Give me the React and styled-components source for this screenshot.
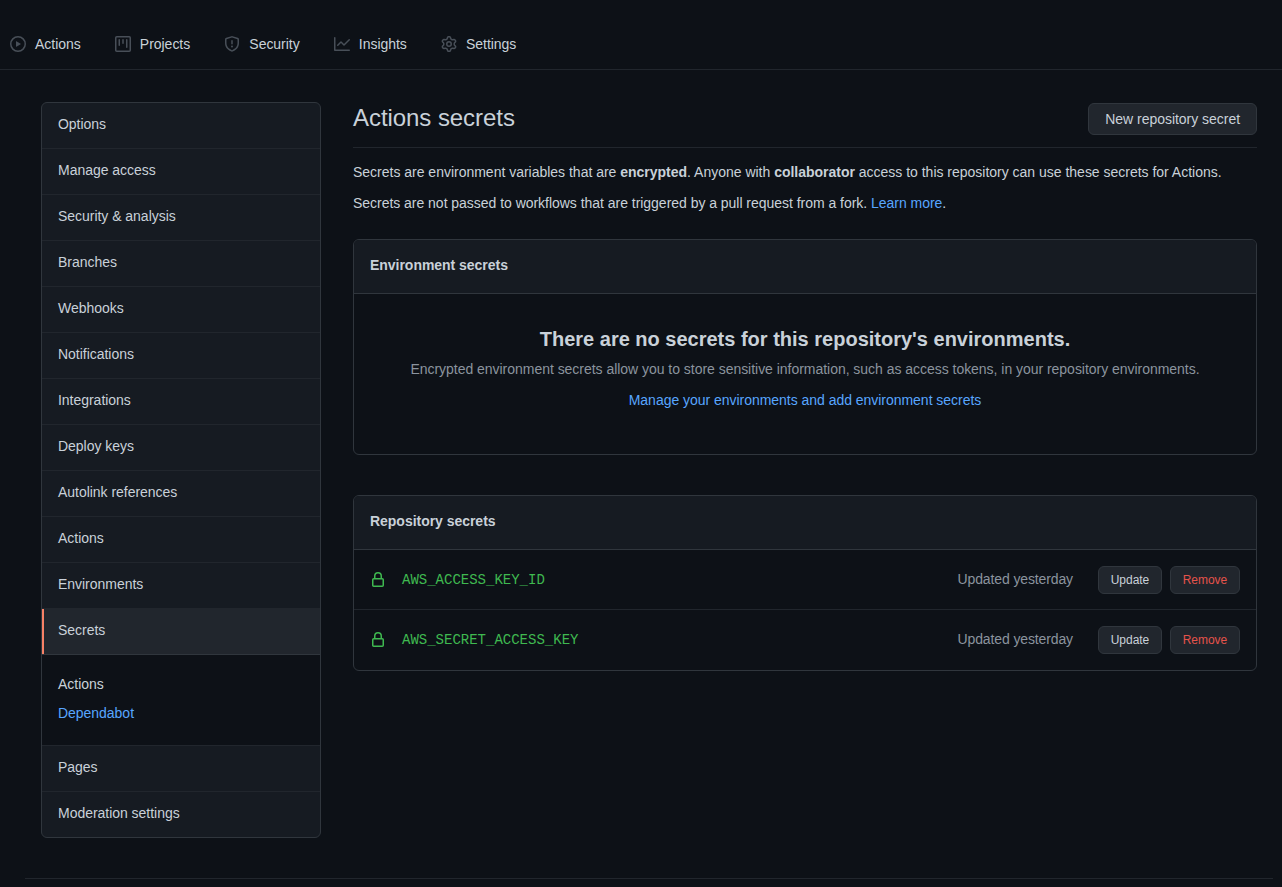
import React from "react"
import styled, { createGlobalStyle } from "styled-components"

const GlobalStyle = createGlobalStyle`
  html, body {
    margin: 0;
    padding: 0;
    background: #0d1117;
    overflow: hidden;
  }
  body {
    font-family: "Liberation Sans", Arial, sans-serif;
    font-size: 14px;
    line-height: 1.5;
    letter-spacing: -0.03px;
    color: #c9d1d9;
  }
  * { box-sizing: border-box; }
`

const Page = styled.div`
  height: 887px;
  overflow: hidden;
`

const TopNav = styled.nav`
  display: flex;
  align-items: center;
  gap: 34.15px;
  height: 70px;
  padding: 18px 0 0 10px;
  border-bottom: 1px solid #21262d;
`

const Tab = styled.a`
  display: flex;
  align-items: center;
  gap: 9px;
  color: #c9d1d9;
  line-height: 16px;
`

const TabIcon = styled.svg`
  width: 16px;
  height: 16px;
  fill: #484f58;
  flex: none;
`

const Layout = styled.div`
  display: flex;
  gap: 32px;
  padding: 32px 25px 0 41px;
`

const Sidebar = styled.aside`
  width: 280px;
  flex: none;
  border: 1px solid #30363d;
  border-radius: 6px;
  background: #161b22;
  overflow: hidden;
`

const MenuItem = styled.a`
  display: block;
  height: 46px;
  padding: 11px 16px 0;
  line-height: 21px;
  border-bottom: 1px solid #21262d;
  color: #c9d1d9;
  &:last-child { border-bottom: none; height: 45px; }
`

const ActiveItem = styled(MenuItem)`
  background: #21262d;
  border-bottom-color: #30363d;
  box-shadow: inset 2px 0 0 #f78166;
`

const SubMenu = styled.div`
  display: flex;
  flex-direction: column;
  gap: 8px;
  height: 91px;
  padding: 19px 16px 0;
  background: #0d1117;
  border-bottom: 1px solid #21262d;
`

const SubLink = styled.a`
  line-height: 21px;
  color: ${(p) => (p.$active ? "#58a6ff" : "#c9d1d9")};
`

const Main = styled.main`
  flex: 1;
  min-width: 0;
`

const Header = styled.div`
  display: flex;
  justify-content: space-between;
  align-items: center;
  height: 46px;
  border-bottom: 1px solid #21262d;
  padding-bottom: 12px;
  margin-bottom: 14px;
`

const Title = styled.h2`
  margin: 0 0 2px;
  font-size: 24px;
  font-weight: 400;
  line-height: 30px;
  letter-spacing: -0.06px;
`

const Button = styled.button`
  font-family: inherit;
  font-size: 14px;
  letter-spacing: inherit;
  line-height: 20px;
  padding: 5px 16px;
  color: #c9d1d9;
  background: #21262d;
  border: 1px solid #30363d;
  border-radius: 6px;
`

const Paragraph = styled.p`
  margin: 0 0 10px;
  line-height: 21px;
  letter-spacing: ${(p) => (p.$loose ? "-0.01px" : "inherit")};
`

const Link = styled.a`
  color: #58a6ff;
`

const Box = styled.section`
  border: 1px solid #30363d;
  border-radius: 6px;
  margin-top: ${(p) => p.$top}px;
  overflow: hidden;
`

const BoxHeader = styled.div`
  height: 54px;
  padding: 15px 16px 0;
  line-height: 21px;
  font-weight: 600;
  background: #161b22;
  border-bottom: 1px solid #30363d;
`

const Blank = styled.div`
  height: 160px;
  padding-top: 30px;
  text-align: center;
`

const BlankTitle = styled.h3`
  margin: 0 0 5px;
  font-size: 20px;
  font-weight: 700;
  line-height: 30px;
  letter-spacing: 0;
`

const BlankText = styled.p`
  margin: 0 0 10px;
  line-height: 21px;
  color: #8b949e;
`

const SecretRow = styled.div`
  display: flex;
  align-items: center;
  height: 60px;
  padding: 0 16px;
  border-bottom: 1px solid #21262d;
  &:last-child { border-bottom: none; padding-bottom: 1px; }
`

const LockIcon = styled.svg`
  width: 16px;
  height: 16px;
  fill: #3fb950;
  flex: none;
`

const SecretName = styled.code`
  flex: 1;
  margin-left: 16px;
  padding-top: 1px;
  font-family: "Liberation Mono", "Courier New", monospace;
  font-size: 14px;
  letter-spacing: 0;
  color: #3fb950;
`

const Updated = styled.span`
  color: #8b949e;
  letter-spacing: -0.12px;
  margin-right: 25px;
`

const SmallButton = styled.button`
  font-family: inherit;
  font-size: 12px;
  letter-spacing: inherit;
  line-height: 20px;
  width: ${(p) => (p.$danger ? 70 : 64)}px;
  height: 28px;
  padding: 3px 0;
  margin-left: ${(p) => (p.$danger ? 8 : 0)}px;
  color: ${(p) => (p.$danger ? "#e5534b" : "#c9d1d9")};
  background: #21262d;
  border: 1px solid #30363d;
  border-radius: 6px;
`

const Footer = styled.div`
  margin: 40px 9px 0 25px;
  border-top: 1px solid #21262d;
`

const icons = {
  play: "M1.5 8a6.5 6.5 0 1113 0 6.5 6.5 0 01-13 0zM8 0a8 8 0 100 16A8 8 0 008 0zM6.379 5.227A.25.25 0 006 5.442v5.117a.25.25 0 00.379.214l4.264-2.559a.25.25 0 000-.428L6.379 5.227z",
  project: "M1.75 0A1.75 1.75 0 000 1.75v12.5C0 15.216.784 16 1.75 16h12.5A1.75 1.75 0 0016 14.25V1.75A1.75 1.75 0 0014.25 0H1.75zM1.5 1.75a.25.25 0 01.25-.25h12.5a.25.25 0 01.25.25v12.5a.25.25 0 01-.25.25H1.75a.25.25 0 01-.25-.25V1.75zM11.75 3a.75.75 0 00-.75.75v7.5a.75.75 0 001.5 0v-7.5a.75.75 0 00-.75-.75zm-8.25.75a.75.75 0 011.5 0v5.5a.75.75 0 01-1.5 0v-5.5zM8 3a.75.75 0 00-.75.75v3.5a.75.75 0 001.5 0v-3.5A.75.75 0 008 3z",
  shield: "M7.467.133a1.75 1.75 0 011.066 0l5.25 1.68A1.75 1.75 0 0115 3.48V7c0 1.566-.32 3.182-1.303 4.682-.983 1.498-2.585 2.813-5.032 3.855a1.7 1.7 0 01-1.33 0c-2.447-1.042-4.049-2.357-5.032-3.855C1.32 10.182 1 8.566 1 7V3.48a1.75 1.75 0 011.217-1.667l5.25-1.68zm.61 1.429a.25.25 0 00-.153 0l-5.25 1.68a.25.25 0 00-.174.238V7c0 1.358.275 2.666 1.057 3.86.784 1.194 2.121 2.34 4.366 3.297a.2.2 0 00.154 0c2.245-.956 3.582-2.104 4.366-3.298C13.225 9.666 13.5 8.36 13.5 7V3.48a.25.25 0 00-.174-.237l-5.25-1.68zM9 10.5a1 1 0 11-2 0 1 1 0 012 0zm-.25-5.75a.75.75 0 10-1.5 0v3a.75.75 0 001.5 0v-3z",
  graph: "M1.5 1.75a.75.75 0 00-1.5 0v12.5c0 .414.336.75.75.75h14.5a.75.75 0 000-1.5H1.5V1.75zm14.28 2.53a.75.75 0 00-1.06-1.06L10 7.94 7.53 5.47a.75.75 0 00-1.06 0L3.22 8.72a.75.75 0 001.06 1.06L7 7.06l2.47 2.47a.75.75 0 001.06 0l5.25-5.25z",
  gear: "M7.429 1.525a6.593 6.593 0 011.142 0c.036.003.108.036.137.146l.289 1.105c.147.56.55.967.997 1.189.174.086.341.183.501.29.417.278.97.423 1.53.27l1.102-.303c.11-.03.175.016.195.046.219.31.41.641.573.989.014.031.022.11-.059.19l-.815.806c-.411.406-.562.957-.53 1.456a4.588 4.588 0 010 .582c-.032.499.119 1.05.53 1.456l.815.806c.08.08.073.159.059.19a6.494 6.494 0 01-.573.99c-.02.029-.086.074-.195.045l-1.103-.303c-.559-.153-1.112-.008-1.529.27-.16.107-.327.204-.5.29-.449.222-.851.628-.998 1.189l-.289 1.105c-.029.11-.101.143-.137.146a6.613 6.613 0 01-1.142 0c-.036-.003-.108-.037-.137-.146l-.289-1.105c-.147-.56-.55-.967-.997-1.189a4.502 4.502 0 01-.501-.29c-.417-.278-.97-.423-1.53-.27l-1.102.303c-.11.03-.175-.016-.195-.046a6.492 6.492 0 01-.573-.989c-.014-.031-.022-.11.059-.19l.815-.806c.411-.406.562-.957.53-1.456a4.587 4.587 0 010-.582c.032-.499-.119-1.05-.53-1.456l-.815-.806c-.08-.08-.073-.159-.059-.19a6.44 6.44 0 01.573-.99c.02-.029.086-.075.195-.045l1.103.303c.559.153 1.112.008 1.529-.27.16-.107.327-.204.5-.29.449-.222.851-.628.998-1.189l.289-1.105c.029-.11.101-.143.137-.146zM8 0c-.236 0-.47.01-.701.03-.743.065-1.29.615-1.458 1.261l-.29 1.106c-.017.066-.078.158-.211.224a5.994 5.994 0 00-.668.386c-.123.082-.233.09-.3.071L3.27 2.776c-.644-.177-1.392.02-1.82.63a7.977 7.977 0 00-.704 1.217c-.315.675-.111 1.422.363 1.891l.815.806c.05.048.098.147.088.294a6.084 6.084 0 000 .772c.01.147-.038.246-.088.294l-.815.806c-.474.469-.678 1.216-.363 1.891.2.428.436.835.704 1.218.428.609 1.176.806 1.82.63l1.103-.303c.066-.019.176-.011.299.071.213.143.436.272.668.386.133.066.194.158.212.224l.289 1.106c.169.646.715 1.196 1.458 1.26a8.094 8.094 0 001.402 0c.743-.064 1.29-.614 1.458-1.26l.29-1.106c.017-.066.078-.158.211-.224a5.98 5.98 0 00.668-.386c.123-.082.233-.09.3-.071l1.102.302c.644.177 1.392-.02 1.82-.63.268-.382.505-.789.704-1.217.315-.675.111-1.422-.364-1.891l-.814-.806c-.05-.048-.098-.147-.088-.294a6.1 6.1 0 000-.772c-.01-.147.039-.246.088-.294l.814-.806c.475-.469.679-1.216.364-1.891a7.992 7.992 0 00-.704-1.218c-.428-.609-1.176-.806-1.82-.63l-1.103.303c-.066.019-.176.011-.299-.071a5.991 5.991 0 00-.668-.386c-.133-.066-.194-.158-.212-.224L10.16 1.29C9.99.645 9.444.095 8.701.031A8.094 8.094 0 008 0zm1.5 8a1.5 1.5 0 11-3 0 1.5 1.5 0 013 0zM11 8a3 3 0 11-6 0 3 3 0 016 0z",
}

const lockPath = "M4 4v2h-.25A1.75 1.75 0 002 7.75v5.5c0 .966.784 1.75 1.75 1.75h8.5A1.75 1.75 0 0014 13.25v-5.5A1.75 1.75 0 0012.25 6H12V4a4 4 0 10-8 0zm6.5 2V4a2.5 2.5 0 00-5 0v2h5zM12 7.5h.25a.25.25 0 01.25.25v5.5a.25.25 0 01-.25.25h-8.5a.25.25 0 01-.25-.25v-5.5a.25.25 0 01.25-.25H12z"

const tabs = [
  { label: "Actions", icon: "play" },
  { label: "Projects", icon: "project" },
  { label: "Security", icon: "shield" },
  { label: "Insights", icon: "graph" },
  { label: "Settings", icon: "gear" },
]

const menuTop = ["Options", "Manage access", "Security & analysis", "Branches", "Webhooks", "Notifications", "Integrations", "Deploy keys", "Autolink references", "Actions", "Environments"]
const secrets = ["AWS_ACCESS_KEY_ID", "AWS_SECRET_ACCESS_KEY"]

export default function App() {
  return (
    <Page>
      <GlobalStyle />
      <TopNav>
        {tabs.map((t) => (
          <Tab key={t.label}>
            <TabIcon viewBox="0 0 16 16"><path fillRule="evenodd" d={icons[t.icon]} /></TabIcon>
            {t.label}
          </Tab>
        ))}
      </TopNav>
      <Layout>
        <Sidebar>
          {menuTop.map((m) => <MenuItem key={m}>{m}</MenuItem>)}
          <ActiveItem>Secrets</ActiveItem>
          <SubMenu>
            <SubLink>Actions</SubLink>
            <SubLink $active>Dependabot</SubLink>
          </SubMenu>
          <MenuItem>Pages</MenuItem>
          <MenuItem>Moderation settings</MenuItem>
        </Sidebar>
        <Main>
          <Header>
            <Title>Actions secrets</Title>
            <Button>New repository secret</Button>
          </Header>
          <Paragraph $loose>
            Secrets are environment variables that are <strong>encrypted</strong>. Anyone with <strong>collaborator</strong> access to this repository can use these secrets for Actions.
          </Paragraph>
          <Paragraph>
            Secrets are not passed to workflows that are triggered by a pull request from a fork. <Link>Learn more</Link>.
          </Paragraph>
          <Box $top={25}>
            <BoxHeader>Environment secrets</BoxHeader>
            <Blank>
              <BlankTitle>There are no secrets for this repository's environments.</BlankTitle>
              <BlankText>Encrypted environment secrets allow you to store sensitive information, such as access tokens, in your repository environments.</BlankText>
              <Link>Manage your environments and add environment secrets</Link>
            </Blank>
          </Box>
          <Box $top={40}>
            <BoxHeader>Repository secrets</BoxHeader>
            {secrets.map((s) => (
              <SecretRow key={s}>
                <LockIcon viewBox="0 0 16 16"><path fillRule="evenodd" d={lockPath} /></LockIcon>
                <SecretName>{s}</SecretName>
                <Updated>Updated yesterday</Updated>
                <SmallButton>Update</SmallButton>
                <SmallButton $danger>Remove</SmallButton>
              </SecretRow>
            ))}
          </Box>
        </Main>
      </Layout>
      <Footer />
    </Page>
  )
}
